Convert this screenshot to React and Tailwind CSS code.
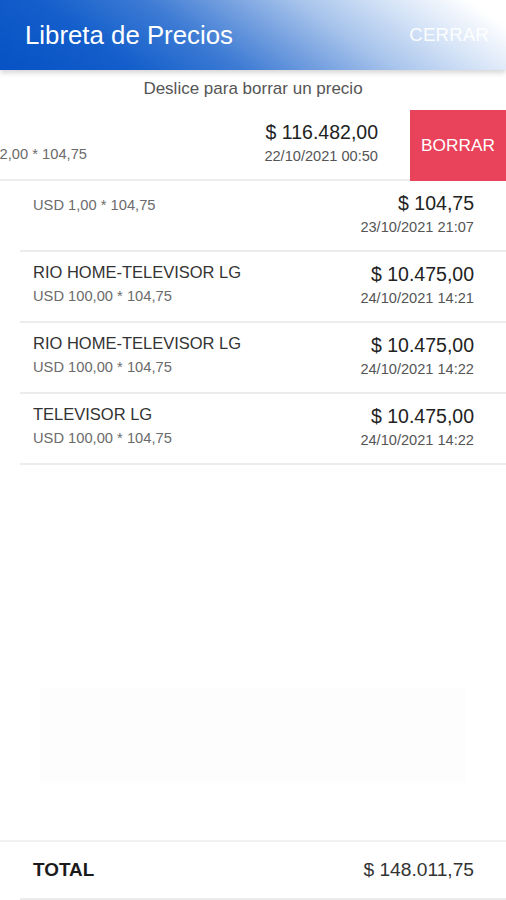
const items = [
  { name: "", sub: "USD 1,00 * 104,75", price: "$ 104,75", date: "23/10/2021 21:07" },
  { name: "RIO HOME-TELEVISOR LG", sub: "USD 100,00 * 104,75", price: "$ 10.475,00", date: "24/10/2021 14:21" },
  { name: "RIO HOME-TELEVISOR LG", sub: "USD 100,00 * 104,75", price: "$ 10.475,00", date: "24/10/2021 14:22" },
  { name: "TELEVISOR LG", sub: "USD 100,00 * 104,75", price: "$ 10.475,00", date: "24/10/2021 14:22" },
];

const Row = ({ item, className = "" }) => {
  return (
    <div className={`flex justify-between h-[71px] ml-[20px] pl-[13px] pr-[32px] border-b-2 border-[#ececec] ${className}`}>
      <div className={item.name ? "pt-[10px]" : "pt-[15px]"}>
        {item.name && (
          <div className="text-[16.5px] leading-[20px] text-[#333]">{item.name}</div>
        )}
        <div className={`text-[14.7px] leading-[18px] text-[#6b6b6b] ${item.name ? "mt-[5px]" : ""}`}>
          {item.sub}
        </div>
      </div>
      <div className="pt-[10px] flex flex-col items-end">
        <div className="text-[19.5px] leading-[24px] text-[#222]">{item.price}</div>
        <div className="text-[14.6px] leading-[18px] text-[#555] mt-[3px]">{item.date}</div>
      </div>
    </div>
  );
};

export default function App() {
  // row currently swiped open to reveal the delete action
  const swiped = { name: "\u00a0", sub: "USD 1.112,00 * 104,75", price: "$ 116.482,00", date: "22/10/2021 00:50" };

  return (
    <div className="h-[900px] w-[506px] flex flex-col bg-white overflow-hidden font-['Liberation_Sans',Arial,sans-serif]">
      <header className="relative z-10 h-[70px] shrink-0 flex items-center justify-between pl-[25px] pr-[17px] bg-[linear-gradient(35deg,#0752c4_0%,#135ecb_22%,#3d7bd4_40%,#6f9cde_52%,#a9c5ec_66%,#d6e4f7_80%,#ffffff_94%)] shadow-[0_3px_5px_rgba(0,0,0,0.16)]">
        <h1 className="text-[25.8px] text-white">Libreta de Precios</h1>
        <button className="text-[18.6px] text-white/90 tracking-[0.2px]">CERRAR</button>
      </header>

      <p className="h-[40px] shrink-0 flex items-center justify-center text-[17px] text-[#555] pb-[2px]">
        Deslice para borrar un precio
      </p>

      <div className="flex-1">
        <div className="overflow-hidden">
          <div className="flex w-[602px] -translate-x-[96px]">
            <Row item={swiped} className="w-[486px] shrink-0" />
            <div className="w-[96px] shrink-0 h-[71px] bg-[#e9425b] flex items-center justify-center text-white text-[17.3px]">
              BORRAR
            </div>
          </div>
        </div>
        {items.map((item, i) => (
          <Row key={i} item={item} />
        ))}
        <div className="mt-[223px] mx-[40px] h-[95px] bg-[#fdfdfd]" />
      </div>

      <footer className="shrink-0 border-t-2 border-[#f2f2f2]">
        <div className="h-[58px] ml-[20px] pl-[13px] pr-[32px] flex items-center justify-between border-b-2 border-[#ececec]">
          <span className="text-[18.9px] font-bold text-[#1a1a1a]">TOTAL</span>
          <span className="text-[19.2px] text-[#333]">$ 148.011,75</span>
        </div>
      </footer>
    </div>
  );
}
